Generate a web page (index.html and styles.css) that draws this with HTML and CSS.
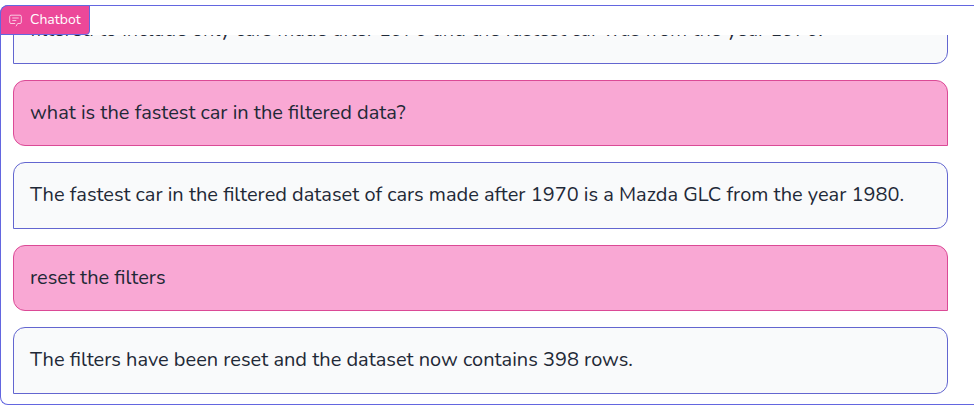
FILE: index.html
```html
<!DOCTYPE html>
<html lang="en">
<head>
<meta charset="utf-8">
<title>Chatbot</title>
<link rel="stylesheet" href="styles.css">
</head>
<body>
<section class="panel">
  <header class="label">
    <svg class="icon" viewBox="0 0 13 13" fill="none" stroke="currentColor" stroke-width=".85" stroke-linejoin="round"><path d="M6.2 9.5H2A1.3 1.3 0 0 1 .7 8.2V2.5A1.3 1.3 0 0 1 2 1.2h9a1.3 1.3 0 0 1 1.3 1.3v5.7A1.3 1.3 0 0 1 11 9.5H8.7L7 12.3"/><path d="M3.3 4h6.4M3.3 6.6h4"/></svg>
    <span class="title">Chatbot</span>
  </header>
  <main class="messages">
    <p class="message bot clipped">filtered to include only cars made after 1970 and the fastest car was from the year 1970.</p>
    <p class="message user">what is the fastest car in the filtered data?</p>
    <p class="message bot">The fastest car in the filtered dataset of cars made after 1970 is a Mazda GLC from the year 1980.</p>
    <p class="message user">reset the filters</p>
    <p class="message bot">The filters have been reset and the dataset now contains 398 rows.</p>
  </main>
</section>
</body>
</html>
```
FILE: styles.css
```css
* { box-sizing: border-box; }
body {
  margin: 0;
  padding-top: 5px;
  background: #fff;
  overflow: hidden;
  font-family: Nunito, Lato, "Open Sans", sans-serif;
}
.panel {
  display: flex;
  flex-direction: column;
  height: 400px;
  border: 1px solid #6366e0;
  border-right: 0;
  border-radius: 8px 0 0 8px;
}
.label {
  display: flex;
  align-items: center;
  gap: 8px;
  width: 90px;
  height: 30px;
  flex: none;
  margin: -1px 0 0 -1px;
  padding: 0 8px;
  border: 1px solid #6366e0;
  border-radius: 8px 0 4px 0;
  background: #ec4899;
  color: #fff;
  font-size: 14px;
}
.icon { width: 13px; height: 13px; flex: none; opacity: .85; }
.title { line-height: 20px; padding-bottom: 1px; }
.messages {
  display: flex;
  flex-direction: column;
  justify-content: flex-end;
  gap: 16px;
  flex: 1;
  min-height: 0;
  overflow: hidden;
  padding: 0 26px 10.4px 12px;
}
.message {
  flex: none;
  height: 66.4px;
  margin: 0;
  padding: 16px;
  border: 1px solid;
  border-radius: 12px;
  color: #1f2937;
  font-size: 20px;
  line-height: 32px;
  white-space: nowrap;
}
.clipped { padding-top: 15.2px; }
.bot { border-color: #6366d0; border-bottom-left-radius: 0; background: #f9fafb; }
.user { border-color: #db4a96; border-bottom-right-radius: 0; background: #f9a8d4; }
```
